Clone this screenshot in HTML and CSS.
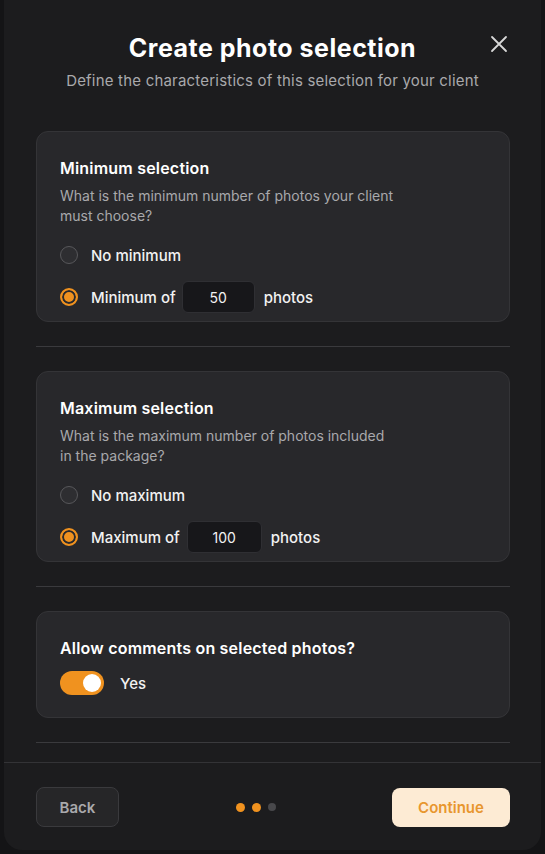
FILE: index.html
```html
<!DOCTYPE html>
<html lang="en">
<head>
<meta charset="utf-8">
<title>Create photo selection</title>
<link rel="stylesheet" href="styles.css">
</head>
<body>
<div class="modal">
  <header class="modal-head">
    <h1 class="title">Create photo selection</h1>
    <p class="subtitle">Define the characteristics of this selection for your client</p>
    <button class="close" aria-label="Close">
      <svg width="18" height="18" viewBox="0 0 18 18"><path d="M2 2L16 16M16 2L2 16" stroke="#d8d8d8" stroke-width="1.8" stroke-linecap="round"/></svg>
    </button>
  </header>

  <div class="body">
    <section class="card">
      <h2 class="card-title">Minimum selection</h2>
      <p class="card-desc">What is the minimum number of photos your client<br>must choose?</p>
      <div class="option"><span class="radio"></span><span class="label">No minimum</span></div>
      <div class="option row"><span class="radio on"></span><span class="label">Minimum of</span><span class="num">50</span><span class="label">photos</span></div>
    </section>
    <hr class="divider">
    <section class="card">
      <h2 class="card-title">Maximum selection</h2>
      <p class="card-desc">What is the maximum number of photos included<br>in the package?</p>
      <div class="option"><span class="radio"></span><span class="label">No maximum</span></div>
      <div class="option row"><span class="radio on"></span><span class="label">Maximum of</span><span class="num wide">100</span><span class="label">photos</span></div>
    </section>
    <hr class="divider">
    <section class="card short">
      <h2 class="card-title">Allow comments on selected photos?</h2>
      <div class="toggle-row"><span class="toggle"><span class="knob"></span></span><span class="label">Yes</span></div>
    </section>
    <hr class="divider last">
  </div>

  <footer class="foot">
    <button class="btn back">Back</button>
    <div class="dots"><span class="dot on"></span><span class="dot on"></span><span class="dot"></span></div>
    <button class="btn cont">Continue</button>
  </footer>
</div>
</body>
</html>
```

FILE: styles.css
```css
* { box-sizing: border-box; }
html, body { margin: 0; padding: 0; }
body {
  background: #141416;
  font-family: "Inter", "Open Sans", sans-serif;
  color: #fff;
  width: 545px;
  height: 854px;
  overflow: hidden;
}
.modal {
  margin-left: 4px;
  width: 537px;
  height: 850px;
  background: #1c1c1e;
  border-radius: 0 0 18px 18px;
  display: flex;
  flex-direction: column;
}
.modal-head {
  position: relative;
  text-align: center;
  padding-top: 31px;
}
.title {
  margin: 0;
  font-size: 25px;
  line-height: 34px;
  font-weight: 700;
  letter-spacing: 0.5px;
}
.subtitle {
  margin: 0;
  margin-top: 6px;
  font-size: 15px;
  line-height: 20px;
  color: #a9a9ac;
  letter-spacing: 0.2px;
}
.close {
  position: absolute;
  right: 33px;
  top: 35px;
  background: none;
  border: 0;
  padding: 0;
  width: 18px;
  height: 18px;
  display: flex;
}
.body {
  padding: 40px 31px 0 32px;
  display: flex;
  flex-direction: column;
}
.card {
  background: #28282b;
  border: 1px solid #343437;
  border-radius: 12px;
  padding: 24px 23px 7px 23px;
  height: 191px;
}
.card.short { height: 107px; }
.card-title {
  margin: 0;
  font-size: 16px;
  line-height: 24px;
  font-weight: 600;
  letter-spacing: 0.2px;
}
.card-desc {
  margin: 6px 0 0;
  font-size: 14px;
  line-height: 20px;
  color: #a9a9ac;
}
.option {
  display: flex;
  align-items: center;
  height: 20px;
  margin-top: 19px;
}
.option.row {
  height: 32px;
  margin-top: 16px;
}
.label {
  font-size: 15px;
  font-weight: 500;
  color: #f2f2f2;
}
.radio {
  width: 18px;
  height: 18px;
  border-radius: 50%;
  border: 1.5px solid #58585b;
  background: #2e2e31;
  margin-right: 13px;
  flex: none;
}
.radio.on {
  border: 2px solid #f0921f;
  background: #f0921f;
  box-shadow: inset 0 0 0 2px #2a2a2d;
}
.num {
  width: 73px;
  height: 32px;
  margin: 0 9px 0 6px;
  background: #17171a;
  border: 1px solid #2f2f33;
  border-radius: 6px;
  display: flex;
  align-items: center;
  justify-content: center;
  font-size: 14px;
  color: #f2f2f2;
}
.num.wide { width: 75px; margin-left: 7px; }
.divider {
  border: 0;
  border-top: 1px solid #3a3a3d;
  margin: 24px 0;
}
.divider.last { margin-bottom: 0; }
.toggle-row {
  display: flex;
  align-items: center;
  margin-top: 11px;
}
.toggle {
  width: 44px;
  height: 24px;
  border-radius: 12px;
  background: #f0921f;
  display: flex;
  align-items: center;
  justify-content: flex-end;
  padding-right: 3px;
  margin-right: 16px;
}
.knob {
  width: 18px;
  height: 18px;
  border-radius: 50%;
  background: #fff;
}
.foot {
  margin-top: auto;
  border-top: 1px solid #333336;
  padding: 24px 31px 23px 32px;
  display: flex;
  align-items: center;
  justify-content: space-between;
}
.btn {
  font-family: inherit;
  font-size: 15px;
  font-weight: 600;
  border-radius: 8px;
  height: 40px;
  cursor: pointer;
}
.back {
  width: 83px;
  background: #262628;
  border: 1px solid #3a3a3d;
  color: #a9a9ac;
}
.cont {
  width: 118px;
  height: 39px;
  background: #fdebd4;
  border: 0;
  color: #e8962e;
}
.dots {
  display: flex;
  align-items: center;
  gap: 7px;
}
.dot {
  width: 9px;
  height: 9px;
  border-radius: 50%;
  background: #48484b;
}
.dot:last-child { width: 8px; height: 8px; }
.dot.on { background: #f0921f; }
```
